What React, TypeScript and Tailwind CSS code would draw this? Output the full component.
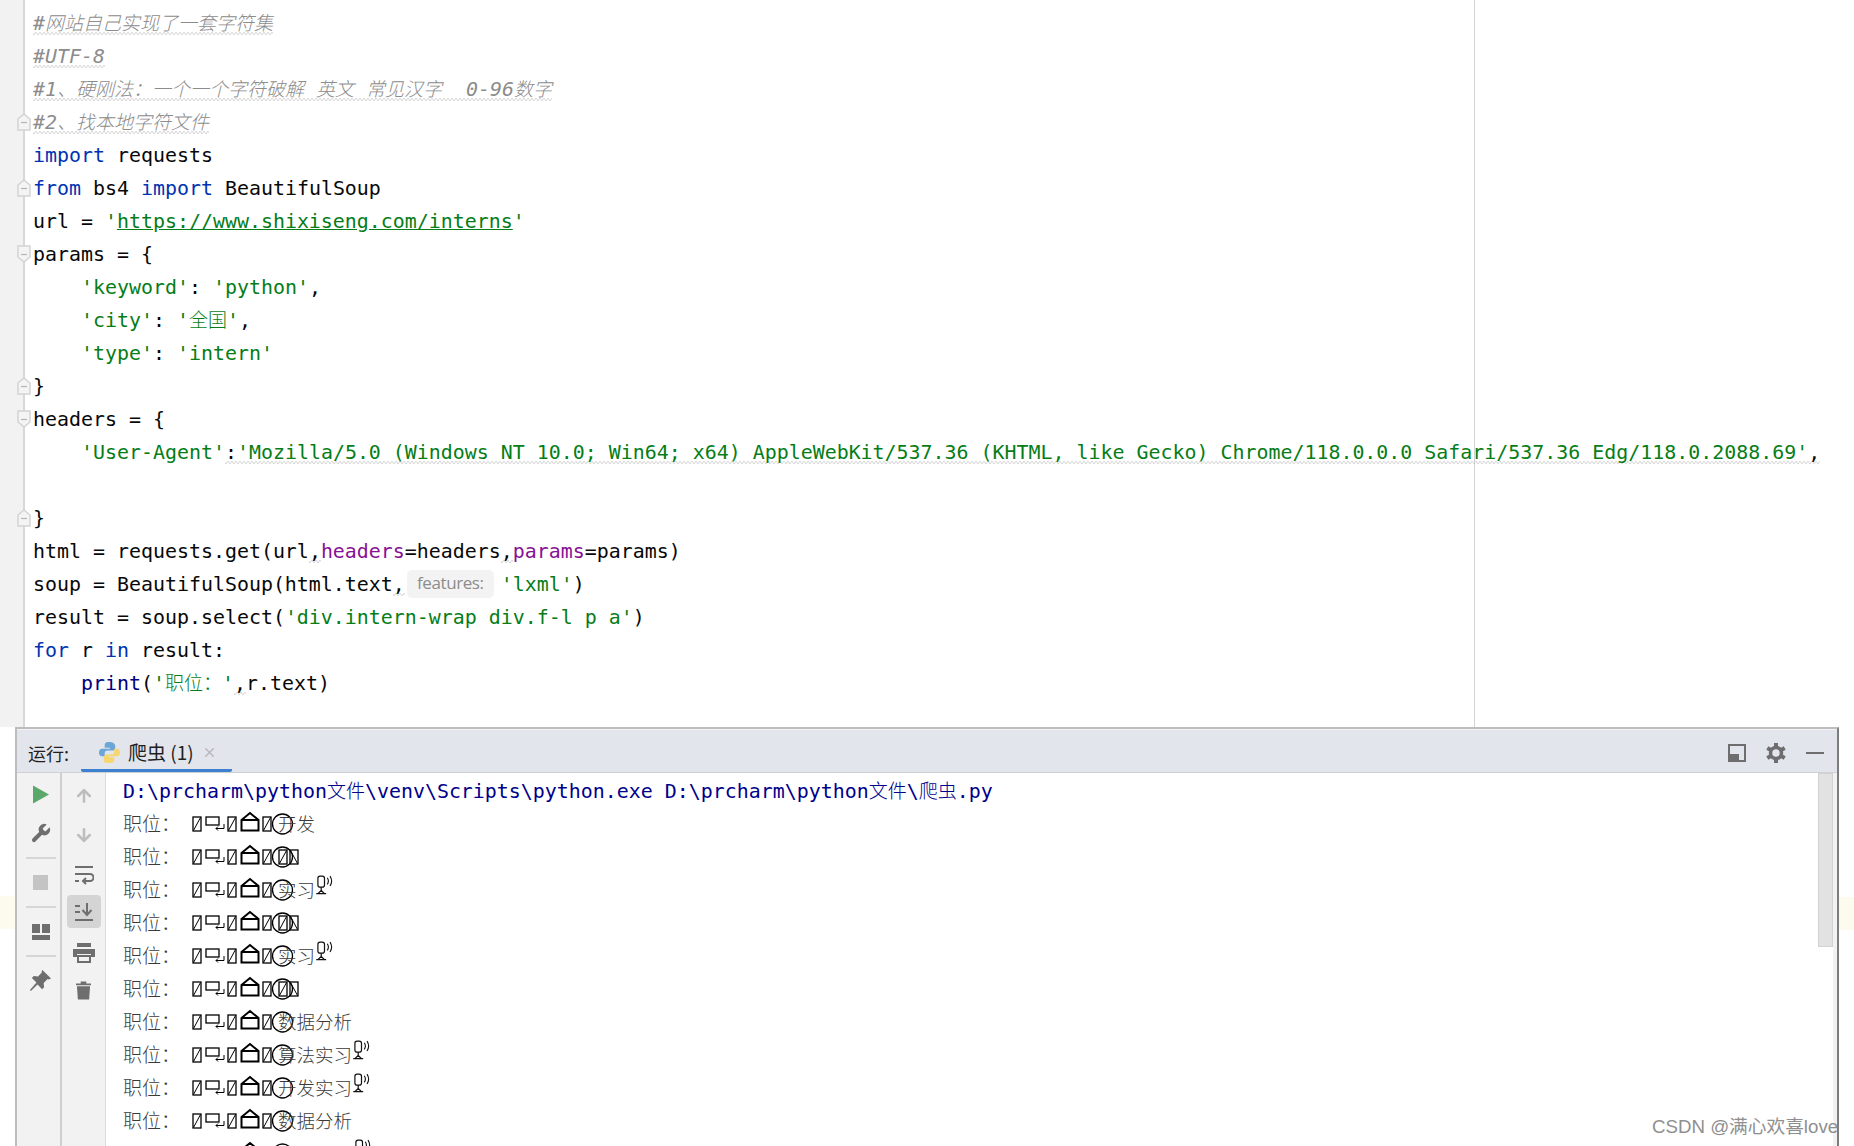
import type { ReactNode } from "react";
import { ArrowDown, ArrowUp, X } from "lucide-react";

const cjk = "font-['Noto_Sans_CJK_SC',sans-serif] font-light";

// the inspection squiggle is finer than the browser's own wavy underline
const squiggle =
  "bg-[linear-gradient(135deg,transparent_40%,#b9b9b9_50%,transparent_60%),linear-gradient(45deg,transparent_40%,#b9b9b9_50%,transparent_60%)] bg-[length:4px_3px,4px_3px] bg-[position:0_100%,2px_100%] bg-repeat-x";

function C({ children }: { children: ReactNode }) {
  return <span className={`${cjk} text-[19px] leading-none`}>{children}</span>;
}

function Kw({ children }: { children: ReactNode }) {
  return <span className="text-[#0033b3]">{children}</span>;
}

function Str({ children }: { children: ReactNode }) {
  return <span className="text-[#067d17]">{children}</span>;
}

function Arg({ children }: { children: ReactNode }) {
  return <span className="text-[#871094]">{children}</span>;
}

function Wavy({ children }: { children: ReactNode }) {
  return <span className={squiggle}>{children}</span>;
}

function Comment({ children }: { children: ReactNode }) {
  return <span className={`italic text-[#8c8c8c] ${squiggle}`}>{children}</span>;
}

function FoldMark({ dir }: { dir: "open" | "close" }) {
  return (
    <svg
      viewBox="0 0 14 18"
      className="absolute left-[17px] top-[6px] w-[14px] h-[20px]"
    >
      {dir === "close" ? (
        <path d="M1 17V6l6-5 6 5v11z" fill="#f4f4f4" stroke="#d2d2d2" strokeWidth="1.4" />
      ) : (
        <path d="M1 1v11l6 5 6-5V1z" fill="#f4f4f4" stroke="#d2d2d2" strokeWidth="1.4" />
      )}
      <path d="M4 9.5h6" stroke="#b4b4b4" strokeWidth="1.2" />
    </svg>
  );
}

function Line({
  children,
  fold,
  indent,
}: {
  children?: ReactNode;
  fold?: "open" | "close";
  indent?: boolean;
}) {
  return (
    <div className={`relative h-[33px] leading-[33px] whitespace-pre ${indent ? "pl-[81px]" : "pl-[33px]"}`}>
      {fold && <FoldMark dir={fold} />}
      {children}
    </div>
  );
}

// the broken font glyphs in the run output, drawn as one strip
function GlyphStrip() {
  return (
    <svg viewBox="0 0 88 24" className="w-[88px] h-[24px] overflow-visible shrink-0" fill="none" stroke="#000">
      <g strokeWidth="1.3">
        <rect x="3" y="5" width="8" height="14" />
        <path d="M3.500 18.500l7-13" strokeWidth="1" />
        <rect x="16" y="5" width="13" height="8" />
        <path d="M34 12v4.500h-8M28 14.500l-2 2 2 2" strokeWidth="1" />
        <rect x="38" y="5" width="8" height="14" />
        <path d="M38.500 18.500l7-13" strokeWidth="1" />
        <path d="M51.500 8l8.500-7 8.500 7v10.500h-17zM51.500 8h17" strokeWidth="2" />
        <rect x="73" y="5" width="8" height="14" />
        <path d="M73.500 18.500l7-13" strokeWidth="1" />
        <circle cx="92.500" cy="12" r="10" />
      </g>
    </svg>
  );
}

function TofuPair() {
  return (
    <svg viewBox="0 0 22 24" className="w-[22px] h-[24px] shrink-0" fill="none" stroke="#000" strokeWidth="1.3">
      <rect x="1" y="5" width="8" height="14" />
      <path d="M1.500 18.500l7-13" strokeWidth="1" />
      <rect x="12" y="5" width="8" height="14" />
      <path d="M12.500 5.500l7 13" strokeWidth="1" />
    </svg>
  );
}

function MicGlyph() {
  return (
    <svg viewBox="0 0 17 20" className="w-[19px] h-[22px] -mt-[7px] shrink-0" fill="none" stroke="#111" strokeWidth="1.1">
      <rect x="2.5" y="1" width="6" height="10" rx="2" />
      <path d="M5.500 11v3M1 17h9M5.500 14l-3 3M5.500 14l3 3" />
      <path d="M11 2.500c1.400 2 1.400 4 0 6M13.500 1c2 3 2 6 0 9" strokeWidth="1" />
    </svg>
  );
}

const jobRows = [
  { text: "开发" },
  { boxes: true },
  { text: "实习", mic: true },
  { boxes: true },
  { text: "实习", mic: true },
  { boxes: true },
  { text: "数据分析" },
  { text: "算法实习", mic: true },
  { text: "开发实习", mic: true },
  { text: "数据分析" },
];

function JobRow({ text, boxes, mic }: { text?: string; boxes?: boolean; mic?: boolean }) {
  return (
    <div className="flex items-center h-[33px] text-[#3a3a3a]">
      <span className={`${cjk} text-[19px] w-[67px] shrink-0`}>职位：</span>
      <GlyphStrip />
      {boxes && <TofuPair />}
      {text && <span className={`${cjk} text-[18.500px] leading-none`}>{text}</span>}
      {mic && <MicGlyph />}
    </div>
  );
}

// last row, only the tallest glyphs reach above the bottom edge
function ClippedRow() {
  return (
    <div className="flex items-center h-[33px] pl-[67px]">
      <GlyphStrip />
      <div className="w-[75px] shrink-0" />
      <MicGlyph />
    </div>
  );
}

function ToolBtn({ children, active }: { children: ReactNode; active?: boolean }) {
  return (
    <div className={`w-[34px] h-[33px] flex items-center justify-center rounded ${active ? "bg-[#d4d4d4]" : ""}`}>
      {children}
    </div>
  );
}

function Sep() {
  return <div className="w-[30px] h-[2px] bg-[#d6d6d6] my-[7px] shrink-0" />;
}

function LeftBar() {
  return (
    <div className="w-[45px] h-full bg-[#f2f2f2] border-r-2 border-[#cfcfcf] flex flex-col items-center pt-[5px] pl-[4px] shrink-0">
      <ToolBtn>
        <svg viewBox="0 0 16 18" className="w-[16px] h-[19px]">
          <path d="M0 0l16 9-16 9z" fill="#59a869" />
        </svg>
      </ToolBtn>
      <div className="mt-[6px]">
        <ToolBtn>
          <svg viewBox="0 0 24 24" className="w-[23px] h-[23px]">
            <path
              d="M14.7 6.3a1 1 0 0 0 0 1.4l1.6 1.6a1 1 0 0 0 1.4 0l3.8-3.8a6 6 0 0 1-7.9 7.9l-6.9 6.9a2.1 2.1 0 0 1-3-3l6.9-6.9a6 6 0 0 1 7.9-7.9z"
              fill="#6e6e6e"
            />
          </svg>
        </ToolBtn>
      </div>
      <Sep />
      <ToolBtn>
        <div className="w-[15px] h-[15px] bg-[#c4c4c4]" />
      </ToolBtn>
      <Sep />
      <ToolBtn>
        <svg viewBox="0 0 18 16" className="w-[18px] h-[16px]" fill="#6e6e6e">
          <rect x="0" y="0" width="8" height="9" />
          <rect x="10" y="0" width="8" height="9" />
          <rect x="0" y="11" width="18" height="5" />
        </svg>
      </ToolBtn>
      <Sep />
      <ToolBtn>
        <svg viewBox="0 0 24 24" className="w-[23px] h-[23px]" fill="#6e6e6e">
          <path d="M14 1l9 9-2.500 1-1-.6-4.200 4.200.4 4.400-2 2-4.800-4.800L2 23l-1-1 6.800-7.900L3 9.300l2-2 4.400.4 4.200-4.200-.6-1z" />
        </svg>
      </ToolBtn>
    </div>
  );
}

function SecondBar() {
  return (
    <div className="w-[44px] h-full bg-[#f2f2f2] border-r border-[#dcdcdc] flex flex-col items-center pt-[6px] shrink-0">
      <ToolBtn>
        <ArrowUp className="w-[20px] h-[20px] text-[#bdbdbd]" strokeWidth={3} />
      </ToolBtn>
      <div className="mt-[6px]">
        <ToolBtn>
          <ArrowDown className="w-[20px] h-[20px] text-[#bdbdbd]" strokeWidth={3} />
        </ToolBtn>
      </div>
      <div className="mt-[7px]">
        <ToolBtn>
          <svg viewBox="0 0 20 20" className="w-[20px] h-[20px]" fill="none" stroke="#6e6e6e" strokeWidth="2">
            <path d="M1 2h18M1 9h15a3 3 0 0 1 0 7h-6M1 16h4M12 13l-3 3 3 3" />
          </svg>
        </ToolBtn>
      </div>
      <div className="mt-[4px]">
        <ToolBtn active>
          <svg viewBox="0 0 20 20" className="w-[20px] h-[20px]" fill="none" stroke="#6e6e6e" strokeWidth="2">
            <path d="M1 4h5M1 10h5M1 18h18M13 1v11M8.500 8l4.500 5 4.500-5" />
          </svg>
        </ToolBtn>
      </div>
      <div className="mt-[8px]">
        <ToolBtn>
          <svg viewBox="0 0 22 20" className="w-[22px] h-[20px]" fill="#6e6e6e">
            <rect x="4" y="0" width="14" height="4" />
            <path d="M0 6h22v8h-4v-3H4v3H0z" />
            <rect x="5" y="13" width="12" height="6" fill="none" stroke="#6e6e6e" strokeWidth="2" />
          </svg>
        </ToolBtn>
      </div>
      <div className="mt-[4px]">
        <ToolBtn>
          <svg viewBox="0 0 16 20" className="w-[15px] h-[20px]" fill="#6e6e6e">
            <path d="M0 3h5V1h6v2h5v2H0zM1 6h14l-1 14H2z" />
          </svg>
        </ToolBtn>
      </div>
    </div>
  );
}

function PythonIcon() {
  return (
    <svg viewBox="0 0 22 22" className="w-[21px] h-[21px]">
      <path d="M11 0C6 0 6 2 6 4v2h5.500v1H3C1 7 0 9 0 11s1 4 3 4h3v-3c0-2 1-3 3-3h5c1.500 0 3-1 3-3V4c0-2-2-4-6-4z" fill="#6ba6d6" />
      <path d="M11 22c5 0 5-2 5-4v-2h-5.500v-1H19c2 0 3-2 3-4s-1-4-3-4h-3v3c0 2-1 3-3 3H8c-1.500 0-3 1-3 3v3c0 2 2 4 6 4z" fill="#f6d66e" />
    </svg>
  );
}

function GearIcon() {
  return (
    <svg viewBox="0 0 20 20" className="w-[20px] h-[20px]">
      <circle cx="10" cy="10" r="5.500" fill="none" stroke="#6e6e6e" strokeWidth="3.500" />
      <g stroke="#6e6e6e" strokeWidth="4">
        <path d="M10 0v4M10 16v4M1.300 5l3.500 2M15.200 13l3.500 2M1.300 15l3.500-2M15.200 7l3.500-2" />
      </g>
    </svg>
  );
}

function PanelHeader() {
  return (
    <div className="h-[43px] bg-[#e2e5ec] border-b border-[#cfd1d6] flex items-center shrink-0">
      <span className="font-['Noto_Sans_CJK_SC',sans-serif] text-[18px] text-[#1f1f1f] ml-[11px] w-[53px] pt-[4px]">运行:</span>
      <div className="h-full w-[151px] flex items-center gap-[8px] pl-[18px] border-b-[3px] border-[#3d7fd0] rounded-b-[2px] pt-[5px]">
        <PythonIcon />
        <span className="font-['Noto_Sans_CJK_SC',sans-serif] text-[19px] text-[#1f1f1f] whitespace-pre">爬虫 (1)</span>
        <X className="w-[15px] h-[15px] text-[#b5b5b5]" strokeWidth={2} />
      </div>
      <div className="ml-auto flex items-center gap-[20px] pr-[13px] pt-[4px]">
        <div className="w-[18px] h-[18px] border-2 border-[#6e6e6e] relative">
          <div className="absolute left-0 bottom-0 w-[9px] h-[6px] bg-[#6e6e6e]" />
        </div>
        <GearIcon />
        <div className="w-[18px] h-[2px] bg-[#6e6e6e]" />
      </div>
    </div>
  );
}

export default function App() {
  return (
    <div className="relative w-[1854px] h-[1146px] overflow-hidden bg-white flex flex-col font-['DejaVu_Sans_Mono','Noto_Sans_CJK_SC',monospace] text-[19.93px] text-[#080808]">
      {/* editor */}
      <div className="relative h-[727px] shrink-0 pt-[7px] overflow-hidden">
        <div className="absolute left-0 top-0 bottom-0 w-[25px] bg-[#f2f2f2] border-r-2 border-[#d8d8d8]" />
        <div className="absolute left-[1474px] top-0 bottom-0 w-px bg-[#d2d2d2]" />
        <div className="relative">
          <Line><Comment>#<C>网站自己实现了一套字符集</C></Comment></Line>
          <Line><Comment>#UTF-8</Comment></Line>
          <Line><Comment>#1<C>、硬刚法：一个一个字符破解</C> <C>英文</C> <C>常见汉字</C>  0-96<C>数字</C></Comment></Line>
          <Line fold="close"><Comment>#2<C>、找本地字符文件</C></Comment></Line>
          <Line><Kw>import</Kw> requests</Line>
          <Line fold="close"><Kw>from</Kw> bs4 <Kw>import</Kw> BeautifulSoup</Line>
          <Line>url = <Str>'<span className="underline decoration-[#067d17]">https://www.shixiseng.com/interns</span>'</Str></Line>
          <Line fold="open">params = {"{"}</Line>
          <Line indent><Str>'keyword'</Str>: <Str>'python'</Str>,</Line>
          <Line indent><Str>'city'</Str>: <Str>'<C>全国</C>'</Str>,</Line>
          <Line indent><Str>'type'</Str>: <Str>'intern'</Str></Line>
          <Line fold="close">{"}"}</Line>
          <Line fold="open">headers = {"{"}</Line>
          <Line indent>
            <Str>'User-Agent'</Str>
            <Wavy>:<Str>'Mozilla/5.0 (Windows NT 10.0; Win64; x64) AppleWebKit/537.36 (KHTML, like Gecko) Chrome/118.0.0.0 Safari/537.36 Edg/118.0.2088.69'</Str>,</Wavy>
          </Line>
          <Line />
          <Line fold="close">{"}"}</Line>
          <Line>html = requests.get(url<Wavy>,</Wavy><Arg>headers</Arg>=headers<Wavy>,</Wavy><Arg>params</Arg>=params)</Line>
          <Line>
            soup = BeautifulSoup(html.text<Wavy>,</Wavy>
            <span className="inline-block ml-[2px] mr-[7px] w-[87px] h-[28px] leading-[25px] text-center align-[2px] bg-[#f3f3f3] rounded-[5px] font-['Open_Sans',sans-serif] text-[17px] tracking-[-0.4px] text-[#8c8c8c]">features:</span>
            <Str>'lxml'</Str>)
          </Line>
          <Line>result = soup.select(<Str>'div.intern-wrap div.f-l p a'</Str>)</Line>
          <Line><Kw>for</Kw> r <Kw>in</Kw> result:</Line>
          <Line indent><span className="text-[#000080]">print</span>(<Str>'<C>职位：</C>'</Str><Wavy>,</Wavy>r.text)</Line>
        </div>
      </div>

      {/* caret row highlight either side of the panel */}
      <div className="absolute left-0 top-[896px] w-[16px] h-[33px] bg-[#fdfbee]" />
      <div className="absolute left-[1839px] top-[897px] w-[15px] h-[33px] bg-[#fdfbee]" />

      {/* run panel */}
      <div className="relative ml-[15px] w-[1824px] flex-1 min-h-0 flex flex-col border-l-2 border-t-2 border-[#bdbdbd] border-r-2 border-r-[#7d7d7d] overflow-hidden">
        <div className="h-[1px] bg-[#f4f4f4] shrink-0" />
        <PanelHeader />
        <div className="flex-1 min-h-0 flex pr-[4px]">
          <LeftBar />
          <SecondBar />
          <div className="flex-1 min-w-0 pl-[17px] overflow-hidden">
            <div className="h-[34px] pt-[2px] leading-[33px] whitespace-pre text-[#00008b]">
              D:\prcharm\python<C>文件</C>\venv\Scripts\python.exe D:\prcharm\python<C>文件</C>\<C>爬虫</C>.py
            </div>
            {jobRows.map((row, i) => (
              <JobRow key={i} {...row} />
            ))}
            <ClippedRow />
          </div>
          <div className="w-[15px] h-[174px] bg-[#e2e2e2] border border-[#d2d2d2] shrink-0" />
        </div>
        <div className="absolute right-0 top-[44px] bottom-0 w-[4px] bg-[#f2f2f2]" />
      </div>

      <div className="absolute left-[1652px] top-[1115px] font-['Liberation_Sans','Noto_Sans_CJK_SC',sans-serif] text-[18.700px] leading-[24px] text-[#8f8f8f] whitespace-pre">
        CSDN @满心欢喜love
      </div>
    </div>
  );
}
